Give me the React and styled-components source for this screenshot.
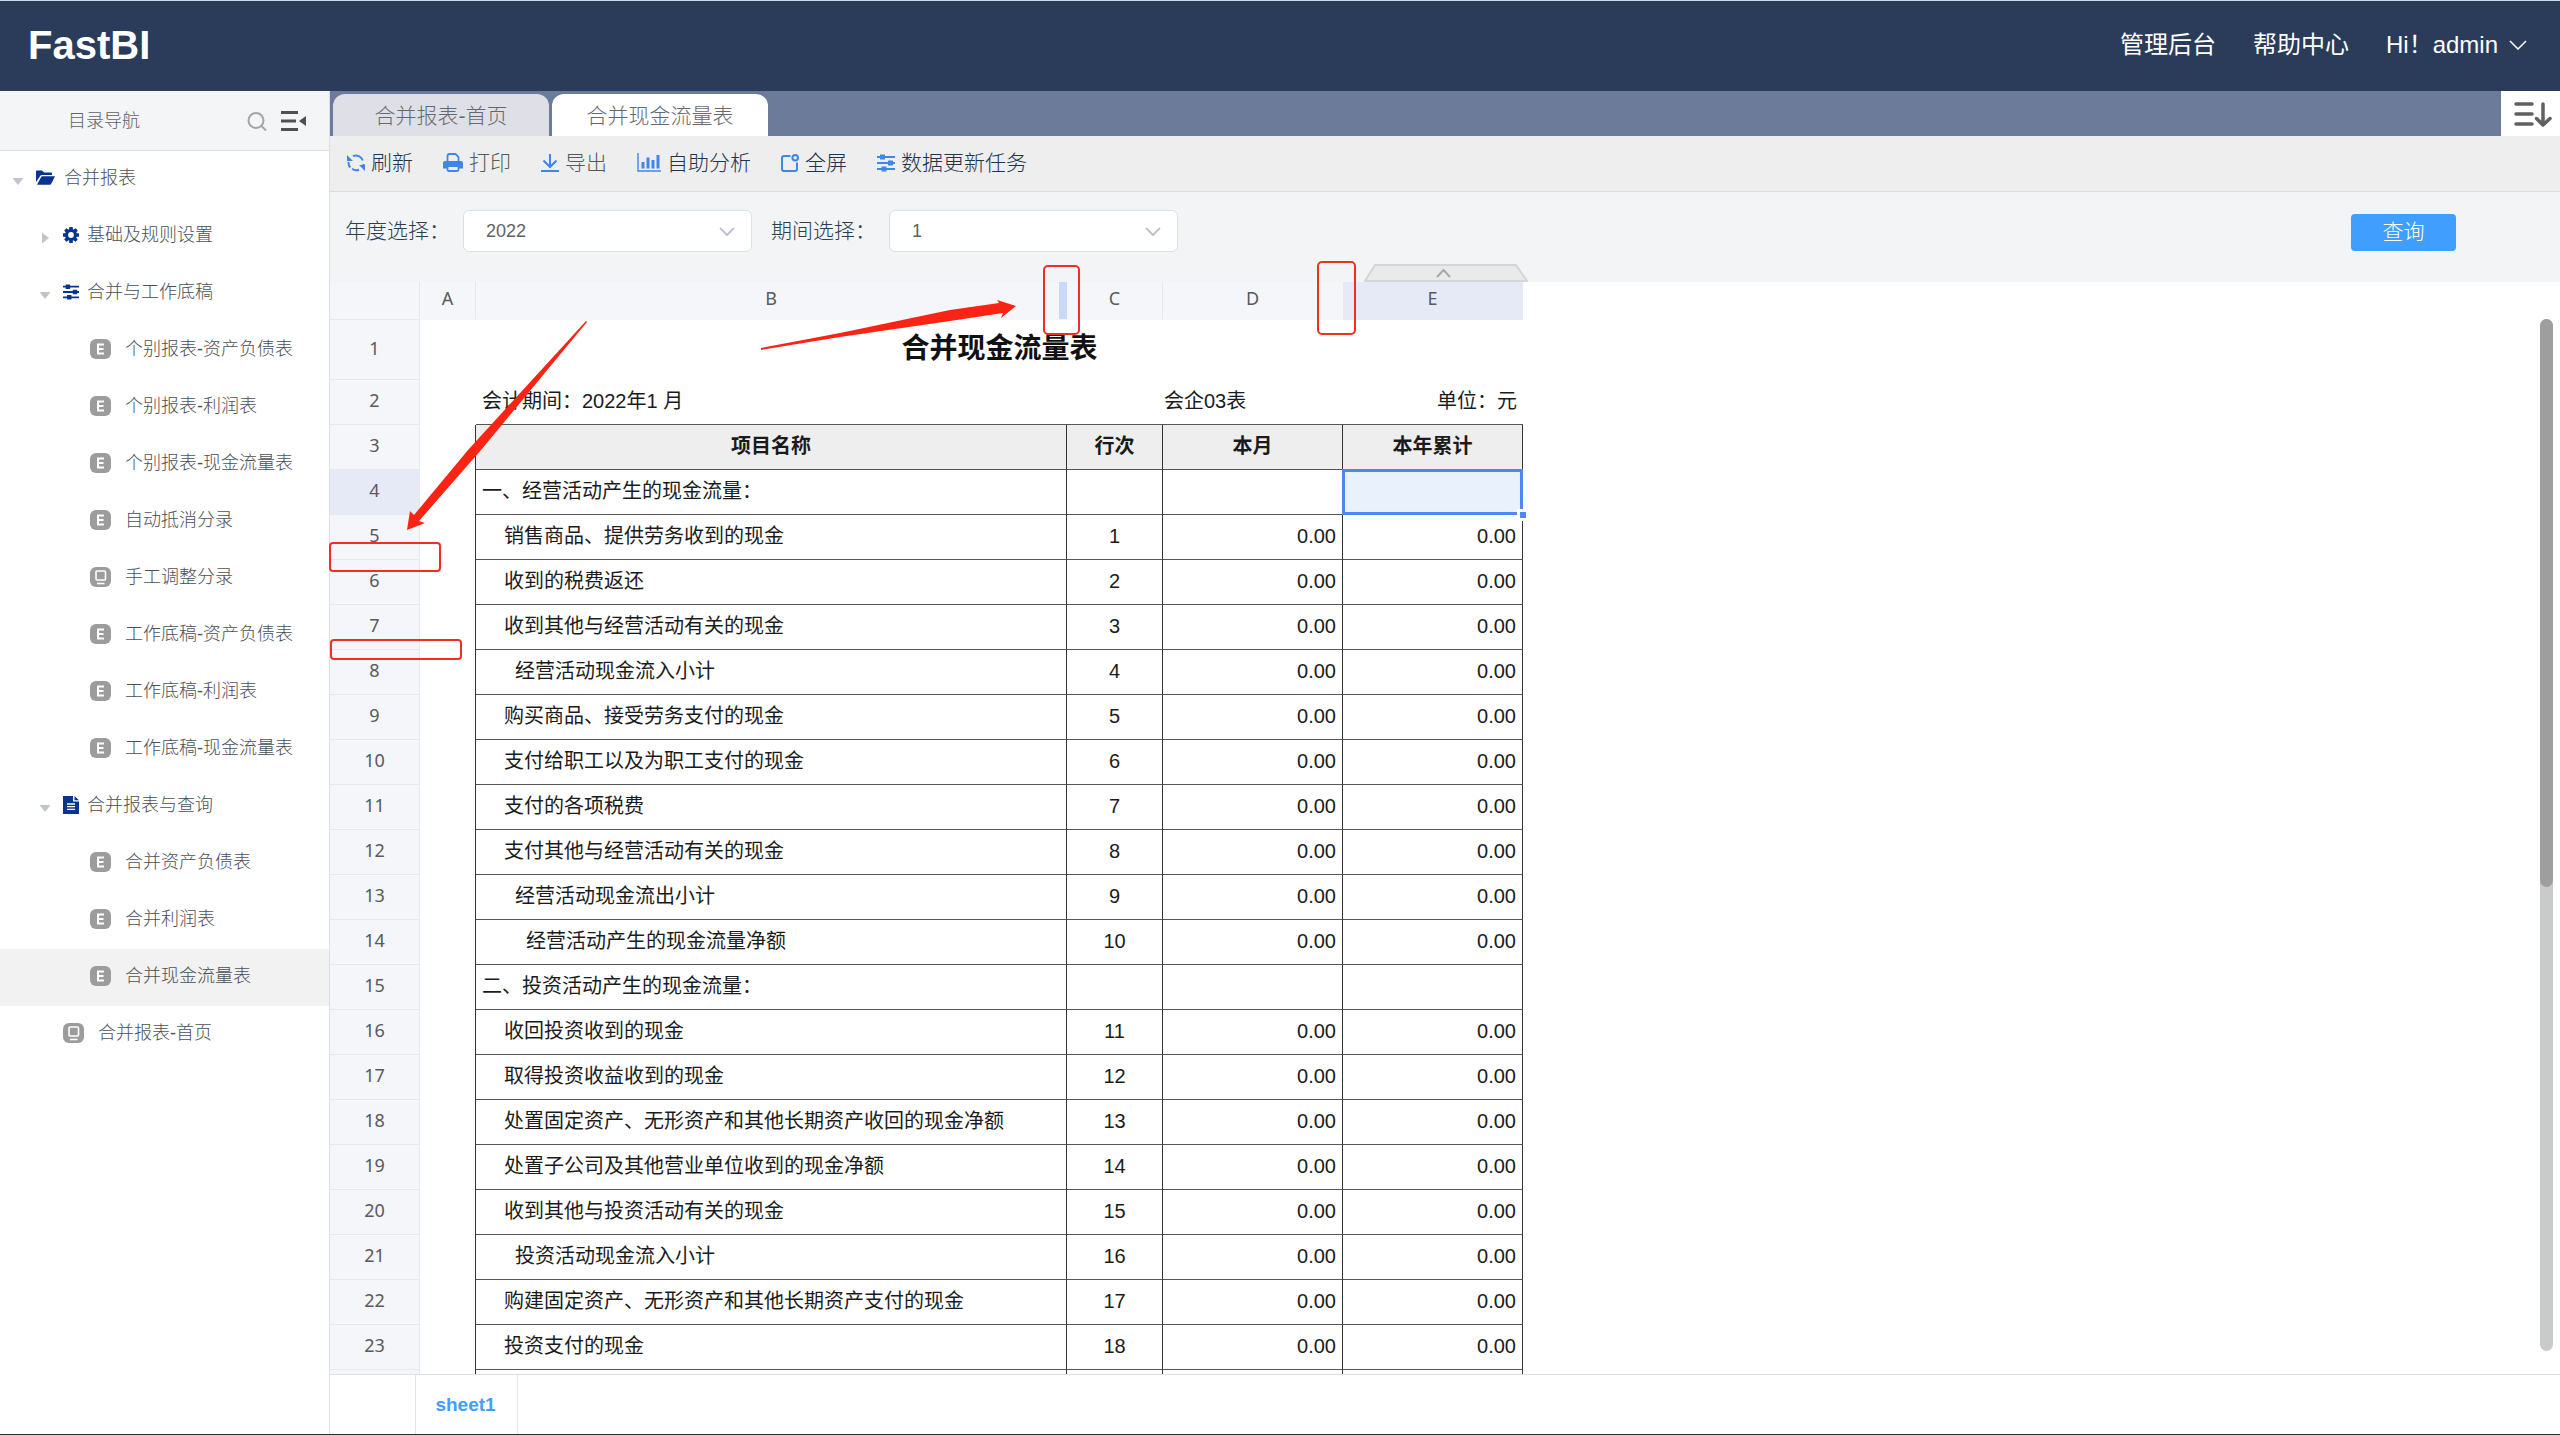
import React from "react";
import styled, { createGlobalStyle } from "styled-components";

const sans = `"Liberation Sans", "Noto Sans CJK SC", sans-serif`;
const gridFont = `"Noto Sans", "Noto Sans CJK SC", sans-serif`;

const GlobalStyle = createGlobalStyle`
  *, *::before, *::after { box-sizing: border-box; }
  body { margin: 0; font-family: ${sans}; color: #2c3e50; background: #fff; }
  button, select { font-family: inherit; }
  button { border: 0; padding: 0; background: none; color: inherit; cursor: pointer; }
  svg { display: block; flex: none; }
`;

const Page = styled.div`
  position: relative;
  display: flex;
  flex-direction: column;
  height: 100vh;
  overflow: hidden;
  border-top: 1px solid #c5dcea;
  border-bottom: 1px solid #22302f;
`;

const TopBar = styled.header`
  display: flex;
  align-items: center;
  justify-content: space-between;
  flex: none;
  height: 90px;
  padding: 0 33px 2px 28px;
  background: #2a3c5a;
  color: #fff;
`;

const Brand = styled.h1`
  margin: 0;
  font-size: 40px;
  line-height: 48px;
`;

const TopNav = styled.nav`
  display: flex;
  align-items: center;
  gap: 37px;
  font-size: 24px;
  line-height: 36px;
`;

const TopLink = styled.a`
  color: #fff;
  text-decoration: none;
`;

const UserButton = styled.button`
  display: flex;
  align-items: center;
  gap: 11px;
  font-size: 24px;
  line-height: 36px;
`;

const Body = styled.div`
  display: flex;
  flex: 1;
  min-height: 0;
`;

const Sidebar = styled.aside`
  flex: none;
  width: 330px;
  border-right: 1px solid #dcdfe3;
  background: #fff;
`;

const SidebarHead = styled.div`
  display: flex;
  align-items: center;
  gap: 14px;
  height: 60px;
  padding: 0 23px 0 68px;
  border-bottom: 1px solid #dedfe1;
  background: #f3f5f6;
`;

const SidebarTitle = styled.h2`
  flex: 1;
  margin: 0;
  font-size: 18px;
  font-weight: 300;
  line-height: 28px;
  color: #606266;
`;

const Tree = styled.ul`
  margin: 0;
  padding: 0;
  list-style: none;
`;

const TreeItem = styled.button`
  display: flex;
  align-items: center;
  width: 100%;
  height: 57px;
  padding: 0 0 4px ${(p) => 10 + p.$level * 27}px;
  background: ${(p) => (p.$active ? "#f2f2f2" : "transparent")};
  color: #4c4f54;
  font-size: 18px;
  font-weight: 300;
  line-height: 28px;
  text-align: left;
`;

const Caret = styled.span`
  display: flex;
  justify-content: center;
  flex: none;
  width: 16px;
  margin-right: 10px;
  padding-top: 6px;
`;

const TreeIcon = styled.span`
  flex: none;
  width: ${(p) => (p.$leaf ? 35 : p.$wide ? 28 : 24)}px;
`;

const Main = styled.main`
  display: flex;
  flex: 1;
  flex-direction: column;
  min-width: 0;
`;

const TabBar = styled.div`
  display: flex;
  align-items: flex-end;
  gap: 3px;
  flex: none;
  height: 45px;
  padding-left: 3px;
  background: #6c7b99;
`;

const Tab = styled.button`
  width: 216px;
  height: 42px;
  padding-top: 2px;
  border-radius: 12px 12px 0 0;
  background: ${(p) => (p.$active ? "#fff" : "#dfe0e7")};
  color: #66686c;
  font-size: 21px;
  font-weight: 300;
  line-height: 32px;
`;

const TabMenu = styled.button`
  display: flex;
  align-items: center;
  justify-content: center;
  width: 59px;
  height: 45px;
  margin-left: auto;
  background: #fff;
`;

const Toolbar = styled.div`
  display: flex;
  align-items: center;
  gap: 30px;
  flex: none;
  height: 56px;
  padding: 0 17px 2px;
  border-bottom: 1px solid #dcdddf;
  background: #eee;
`;

const Tool = styled.button`
  display: flex;
  align-items: center;
  gap: 6px;
  color: ${(p) => (p.$muted ? "#56585c" : "#22344a")};
  font-size: 21px;
  font-weight: 300;
  line-height: 32px;
`;

const Filters = styled.form`
  position: relative;
  display: flex;
  align-items: center;
  flex: none;
  height: 90px;
  padding: 0 104px 12px 15px;
  background: #f2f4f5;
`;

const FilterLabel = styled.label`
  width: 118px;
  font-size: 21px;
  font-weight: 300;
  line-height: 32px;
`;

const SelectBox = styled.div`
  display: grid;
  align-items: center;
  width: 289px;
  margin-right: 19px;
  > * { grid-area: 1 / 1; }
  > svg { justify-self: end; margin-right: 17px; pointer-events: none; }
`;

const Select = styled.select`
  appearance: none;
  width: 100%;
  height: 42px;
  padding: 0 22px;
  border: 1px solid #dcdfe6;
  border-radius: 6px;
  background: #fff;
  color: #606266;
  font-size: 18px;
`;

const QueryButton = styled.button`
  width: 105px;
  height: 37px;
  margin-top: 2px;
  margin-left: auto;
  border-radius: 4px;
  background: #409eff;
  color: #fff;
  font-size: 21px;
  font-weight: 300;
  line-height: 32px;
`;

const FoldHandle = styled.button`
  position: absolute;
  bottom: 0;
  left: 50%;
  margin-left: -81px;
`;

const SheetArea = styled.section`
  display: flex;
  justify-content: space-between;
  flex: 1;
  min-height: 0;
  overflow: hidden;
`;

const ScrollTrack = styled.div`
  flex: none;
  width: 13px;
  margin: 37px 7px 23px 0;
  border-radius: 7px;
  background: #c9cbcb;
`;

const ScrollThumb = styled.div`
  height: 55%;
  border-radius: 7px;
  background: #9e9e9e;
`;

const Grid = styled.table`
  flex: none;
  align-self: flex-start;
  width: 1193px;
  table-layout: fixed;
  border-collapse: separate;
  border-spacing: 0;
  font-size: 20px;
  line-height: 28px;
  color: #1b1b1b;
`;

const Col = styled.col`
  width: ${(p) => p.$w}px;
`;

const GridRow = styled.tr`
  height: ${(p) => p.$h}px;
`;

const ColHead = styled.th`
  position: relative;
  padding: 0 0 5px;
  border-right: 1px solid ${(p) => (p.$line ? "#e6e8ec" : "transparent")};
  border-bottom: 1px solid ${(p) => (p.$corner ? "#e6e8ec" : "transparent")};
  background: ${(p) => (p.$active ? "#e6eaf7" : "#f4f6f9")};
  color: #585a5e;
  font: 400 18px/28px ${gridFont};
`;

const ResizeBar = styled.span`
  position: absolute;
  inset: 0 -1px 0 auto;
  width: 8px;
  background: #cbd9f8;
`;

const RowHead = styled.th`
  padding: 0 0 4px;
  border-right: 1px solid #e6e8ec;
  border-bottom: 1px solid #e6e8ec;
  background: ${(p) => (p.$active ? "#e6eaf7" : "#f4f6f9")};
  color: #585a5e;
  font: 400 18px/28px ${gridFont};
`;

const Gutter = styled.td`
  padding: 0;
  border-right: 1px solid ${(p) => (p.$edge ? "#333" : "transparent")};
`;

const Title = styled.td`
  padding: 0 0 2px;
  color: #111;
  text-align: center;
  font-size: 28px;
  font-weight: 700;
  line-height: 40px;
`;

const Info = styled.td`
  padding: 0 ${(p) => (p.$flush ? 1 : 6)}px 2px;
  border-bottom: 1px solid #555;
  text-align: ${(p) => p.$align || "left"};
  white-space: nowrap;
`;

const Field = styled.th`
  padding: 0 0 2px;
  border-right: 1px solid #333;
  border-bottom: 1px solid #555;
  background: #eee;
  text-align: center;
  font-weight: 700;
`;

const Cell = styled.td`
  position: relative;
  padding: 0 6px 2px ${(p) => 6 + (p.$indent || 0) * 11}px;
  border-right: 1px solid #333;
  border-bottom: 1px solid #555;
  text-align: ${(p) => p.$align || "left"};
  white-space: nowrap;
`;

const Selection = styled.span`
  position: absolute;
  inset: -1px;
  border: 3px solid #4f88ea;
  background: #e9f1fd;
  &::after {
    content: "";
    position: absolute;
    right: -9px;
    bottom: -9px;
    z-index: 1;
    width: 12px;
    height: 12px;
    border: 3px solid #fff;
    background: #4f88ea;
  }
`;

const SheetTabs = styled.footer`
  display: flex;
  flex: none;
  height: 60px;
  padding-left: 85px;
  border-top: 1px solid #dedfe1;
`;

const SheetTab = styled.button`
  width: 103px;
  padding-right: 2px;
  border: solid #e4e5e8;
  border-width: 0 1px;
  color: #409eff;
  font-size: 19px;
  font-weight: 700;
`;

const Marks = styled.svg`
  position: absolute;
  top: -1px;
  left: 0;
  pointer-events: none;
`;

/* ---- icons ---- */

const Chevron = ({ w = 16, h = 9, color = "#c0c4cc", sw = 2 }) => (
  <svg width={w} height={h} viewBox={`0 0 ${w} ${h}`} fill="none" stroke={color} strokeWidth={sw}>
    <path d={`M1 1L${w / 2} ${h - 1}L${w - 1} 1`} />
  </svg>
);

const Sliders = ({ color, size = 18 }) => (
  <svg width={size} height={size} viewBox="0 0 18 18" fill={color}>
    <path d="M0 2h18v2H0zM0 8h18v2H0zM0 14h18v2H0z" />
    <path d="M3 0.5h5v5H3zM11 6.500h5v5h-5zM4.500 12.500h5v5h-5z" />
  </svg>
);

const badge = <rect width="21" height="20" rx="6" fill="#9c9c9c" />;

const treeIcons = {
  excel: (
    <svg width="21" height="20" viewBox="0 0 21 20">
      {badge}
      <path d="M14 5.500H8v9h6M8 10h5.500" fill="none" stroke="#fff" strokeWidth="2" />
    </svg>
  ),
  board: (
    <svg width="21" height="20" viewBox="0 0 21 20">
      {badge}
      <rect x="6" y="4" width="9.500" height="9" rx="1" fill="none" stroke="#fff" strokeWidth="1.600" />
      <path d="M7 16.500h7.500" stroke="#fff" strokeWidth="1.600" />
    </svg>
  ),
  folder: (
    <svg width="19" height="16" viewBox="0 0 19 16" fill="#07348c">
      <path d="M0 12V1.500Q0 .5 1 .5h5l2 2h7q1 0 1 1V5H6Q4.500 5 4 6.200z" />
      <path d="M1 14.800L5 7.200q.4-.9 1.400-.9H19l-3.600 7.200q-.6 1.300-1.900 1.300z" />
    </svg>
  ),
  gear: (
    <svg width="16" height="16" viewBox="0 0 16 16">
      <g fill="#07348c">
        <circle cx="8" cy="8" r="6" />
        {[0, 45, 90, 135].map((a) => (
          <rect key={a} x="6.200" y="0" width="3.600" height="16" rx=".6" transform={`rotate(${a} 8 8)`} />
        ))}
      </g>
      <circle cx="8" cy="8" r="2.900" fill="#fff" />
    </svg>
  ),
  sliders: <Sliders color="#07348c" size={16} />,
  doc: (
    <svg width="16" height="18" viewBox="0 0 16 18">
      <path d="M0 0h10v5.500h6V18H0z" fill="#07348c" />
      <path d="M11.500 0L16 4.300h-4.500z" fill="#07348c" />
      <path d="M4 8h8M4 10.700h8M4 13.400h8" stroke="#fff" strokeWidth="1.300" />
    </svg>
  ),
};

const blue = "#3f86e6";
const toolIcons = {
  refresh: (
    <svg width="18" height="18" viewBox="0 0 18 18" fill="none" stroke={blue} strokeWidth="2">
      <path d="M6 2.200a7.200 7.200 0 0 1 9.800 4.300M1.500 8a7.200 7.200 0 0 0 1.800 5.500M12 15.800a7.200 7.200 0 0 1-7-1M16.700 10a7.200 7.200 0 0 1-1.700 3.500" />
      <path d="M0 1v6h6zM18 17v-6h-6z" fill={blue} stroke="none" />
    </svg>
  ),
  print: (
    <svg width="20" height="19" viewBox="0 0 20 19">
      <path d="M4.500 8V3q0-2 2-2h6l3 3v4" fill="none" stroke={blue} strokeWidth="1.800" />
      <path d="M2 8h16q2 0 2 2v5.500h-4V13H4v2.500H0V10q0-2 2-2z" fill={blue} />
      <path d="M4.500 13h11v3.500q0 1.500-1.500 1.500H6q-1.500 0-1.500-1.500z" fill="none" stroke={blue} strokeWidth="1.800" />
    </svg>
  ),
  download: (
    <svg width="18" height="18" viewBox="0 0 18 18" fill="none" stroke={blue} strokeWidth="2">
      <path d="M9 0v12.500M2.500 6.500L9 13l6.500-6.500M0 17h18" />
    </svg>
  ),
  chart: (
    <svg width="24" height="19" viewBox="0 0 24 19" fill="none" stroke={blue}>
      <path d="M1 0v18h23" strokeWidth="1.400" />
      <path d="M6 15.500V9M11 15.500V4.500M16 15.500V7M21 15.500V2" strokeWidth="3" />
    </svg>
  ),
  full: (
    <svg width="18" height="18" viewBox="0 0 18 18" fill="none" stroke={blue} strokeWidth="2">
      <path d="M9.500 2H3Q1 2 1 4v11q0 2 2 2h11q2 0 2-2V8.500" />
      <circle cx="14.200" cy="3.800" r="2.800" />
    </svg>
  ),
  sliders: <Sliders color={blue} />,
};

/* ---- data ---- */

const tree = [
  { level: 0, icon: "folder", text: "合并报表", open: true },
  { level: 1, icon: "gear", text: "基础及规则设置", open: false },
  { level: 1, icon: "sliders", text: "合并与工作底稿", open: true },
  { level: 2, icon: "excel", text: "个别报表-资产负债表" },
  { level: 2, icon: "excel", text: "个别报表-利润表" },
  { level: 2, icon: "excel", text: "个别报表-现金流量表" },
  { level: 2, icon: "excel", text: "自动抵消分录" },
  { level: 2, icon: "board", text: "手工调整分录" },
  { level: 2, icon: "excel", text: "工作底稿-资产负债表" },
  { level: 2, icon: "excel", text: "工作底稿-利润表" },
  { level: 2, icon: "excel", text: "工作底稿-现金流量表" },
  { level: 1, icon: "doc", text: "合并报表与查询", open: true },
  { level: 2, icon: "excel", text: "合并资产负债表" },
  { level: 2, icon: "excel", text: "合并利润表" },
  { level: 2, icon: "excel", text: "合并现金流量表", active: true },
  { level: 1, icon: "board", text: "合并报表-首页" },
];

const tools = [
  { icon: "refresh", text: "刷新" },
  { icon: "print", text: "打印", muted: true },
  { icon: "download", text: "导出", muted: true },
  { icon: "chart", text: "自助分析" },
  { icon: "full", text: "全屏" },
  { icon: "sliders", text: "数据更新任务" },
];

const lines = [
  [0, "一、经营活动产生的现金流量："],
  [2, "销售商品、提供劳务收到的现金", 1],
  [2, "收到的税费返还", 2],
  [2, "收到其他与经营活动有关的现金", 3],
  [3, "经营活动现金流入小计", 4],
  [2, "购买商品、接受劳务支付的现金", 5],
  [2, "支付给职工以及为职工支付的现金", 6],
  [2, "支付的各项税费", 7],
  [2, "支付其他与经营活动有关的现金", 8],
  [3, "经营活动现金流出小计", 9],
  [4, "经营活动产生的现金流量净额", 10],
  [0, "二、投资活动产生的现金流量："],
  [2, "收回投资收到的现金", 11],
  [2, "取得投资收益收到的现金", 12],
  [2, "处置固定资产、无形资产和其他长期资产收回的现金净额", 13],
  [2, "处置子公司及其他营业单位收到的现金净额", 14],
  [2, "收到其他与投资活动有关的现金", 15],
  [3, "投资活动现金流入小计", 16],
  [2, "购建固定资产、无形资产和其他长期资产支付的现金", 17],
  [2, "投资支付的现金", 18],
];

function CaretIcon({ open }) {
  if (open === undefined) return null;
  return (
    <svg width="12" height="12" viewBox="0 0 12 12" fill="#c0c4cc">
      <path d={open ? "M.5 3h11L6 10z" : "M3 .5v11L10 6z"} />
    </svg>
  );
}

function Sheet() {
  return (
    <Grid>
      <colgroup>
        {[90, 56, 591, 96, 180, 180].map((w, i) => <Col key={i} $w={w} />)}
      </colgroup>
      <thead>
        <GridRow $h={38}>
          <ColHead $corner $line />
          <ColHead $line>A</ColHead>
          <ColHead>B<ResizeBar /></ColHead>
          <ColHead $line>C</ColHead>
          <ColHead>D</ColHead>
          <ColHead $active>E</ColHead>
        </GridRow>
      </thead>
      <tbody>
        <GridRow $h={60}>
          <RowHead>1</RowHead>
          <Gutter />
          <Title colSpan={4}>合并现金流量表</Title>
        </GridRow>
        <GridRow $h={45}>
          <RowHead>2</RowHead>
          <Gutter />
          <Info>会计期间：2022年1 月</Info>
          <Info />
          <Info $flush>会企03表</Info>
          <Info $align="right">单位：元</Info>
        </GridRow>
        <GridRow $h={45}>
          <RowHead>3</RowHead>
          <Gutter $edge />
          <Field>项目名称</Field>
          <Field>行次</Field>
          <Field>本月</Field>
          <Field>本年累计</Field>
        </GridRow>
        {lines.map(([indent, name, no], i) => (
          <GridRow $h={45} key={i}>
            <RowHead $active={i === 0}>{i + 4}</RowHead>
            <Gutter $edge />
            <Cell $indent={indent}>{name}</Cell>
            <Cell $align="center">{no}</Cell>
            <Cell $align="right">{no && "0.00"}</Cell>
            <Cell $align="right">
              {no && "0.00"}
              {i === 0 && <Selection />}
            </Cell>
          </GridRow>
        ))}
        <GridRow $h={45}>
          <RowHead />
          <Gutter $edge />
          <Cell />
          <Cell />
          <Cell />
          <Cell />
        </GridRow>
      </tbody>
    </Grid>
  );
}

function Annotations() {
  return (
    <Marks width="1400" height="700" viewBox="0 0 1400 700">
      <g fill="none" stroke="#ee2f24" strokeWidth="2">
        <rect x="1044" y="266" width="35" height="68" rx="4" />
        <rect x="1318" y="262" width="37" height="72" rx="4" />
        <rect x="330" y="543" width="110" height="28" rx="3" />
        <rect x="331" y="640" width="130" height="19" rx="3" />
      </g>
      <g fill="#fb2414">
        <path d="M586 321L587 322L481 450L419 521L425 523L407 530L410 511L414 515L468 450Z" />
        <path d="M761 348L840 333L950 310L999 303L997 300L1016 306L1001 318L1003 313L950 321L840 337L761 350Z" />
      </g>
    </Marks>
  );
}

export default function App() {
  return (
    <Page>
      <GlobalStyle />
      <TopBar>
        <Brand>FastBI</Brand>
        <TopNav>
          <TopLink href="#admin">管理后台</TopLink>
          <TopLink href="#help">帮助中心</TopLink>
          <UserButton type="button">
            Hi！admin
            <Chevron w={18} h={10} color="#fff" sw={1.5} />
          </UserButton>
        </TopNav>
      </TopBar>
      <Body>
        <Sidebar>
          <SidebarHead>
            <SidebarTitle>目录导航</SidebarTitle>
            <button type="button" aria-label="搜索">
              <svg width="20" height="20" viewBox="0 0 20 20" fill="none" stroke="#a3a5a8" strokeWidth="2">
                <circle cx="9" cy="9.500" r="7.500" />
                <path d="M14.500 15L19 19.500" />
              </svg>
            </button>
            <button type="button" aria-label="收起">
              <svg width="25" height="20" viewBox="0 0 25 20" fill="#505050">
                <path d="M0 0h17v3H0zM0 8.500h15v3H0zM0 17h17v3H0zM25 5v10l-7-5z" />
              </svg>
            </button>
          </SidebarHead>
          <Tree>
            {tree.map((n) => (
              <li key={n.text}>
                <TreeItem type="button" $level={n.level} $active={n.active}>
                  <Caret><CaretIcon open={n.open} /></Caret>
                  <TreeIcon $leaf={n.open === undefined} $wide={n.icon === "folder"}>
                    {treeIcons[n.icon]}
                  </TreeIcon>
                  {n.text}
                </TreeItem>
              </li>
            ))}
          </Tree>
        </Sidebar>
        <Main>
          <TabBar>
            <Tab type="button">合并报表-首页</Tab>
            <Tab type="button" $active>合并现金流量表</Tab>
            <TabMenu type="button" aria-label="标签菜单">
              <svg width="42" height="26" viewBox="-4 0 42 26" fill="none" stroke="#606060" strokeWidth="3.500" strokeLinecap="round" strokeLinejoin="round">
                <path d="M2 3h16M2 13h16M2 23h16M29 3v21M22.500 17.500L29 24l7-6.500" />
              </svg>
            </TabMenu>
          </TabBar>
          <Toolbar>
            {tools.map((t) => (
              <Tool type="button" key={t.text} $muted={t.muted}>
                {toolIcons[t.icon]}
                {t.text}
              </Tool>
            ))}
          </Toolbar>
          <Filters>
            <FilterLabel htmlFor="year">年度选择：</FilterLabel>
            <SelectBox>
              <Select id="year" defaultValue="2022">
                <option>2022</option>
              </Select>
              <Chevron />
            </SelectBox>
            <FilterLabel htmlFor="period">期间选择：</FilterLabel>
            <SelectBox>
              <Select id="period" defaultValue="1">
                <option>1</option>
              </Select>
              <Chevron />
            </SelectBox>
            <QueryButton type="button">查询</QueryButton>
            <FoldHandle type="button" aria-label="收起筛选">
              <svg width="164" height="18" viewBox="0 0 164 18">
                <path d="M1 17L11 1H152L163 17Z" fill="#e9eaea" stroke="#d3d5d6" strokeWidth="2" />
                <path d="M73 13L79.500 6L86 13" fill="none" stroke="#a8a8a8" strokeWidth="2" />
              </svg>
            </FoldHandle>
          </Filters>
          <SheetArea>
            <Sheet />
            <ScrollTrack><ScrollThumb /></ScrollTrack>
          </SheetArea>
          <SheetTabs>
            <SheetTab type="button">sheet1</SheetTab>
          </SheetTabs>
        </Main>
      </Body>
      <Annotations />
    </Page>
  );
}
